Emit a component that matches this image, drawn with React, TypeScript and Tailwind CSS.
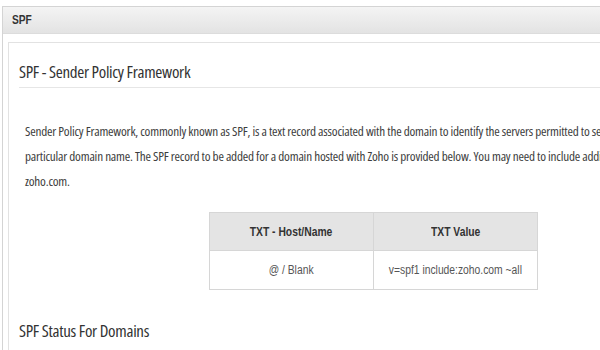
import React from "react";

export default function App() {
  return (
    <div className="w-[600px] h-[350px] overflow-hidden bg-white pt-[6px] pl-[2px]" style={{ fontFamily: '"Open Sans", sans-serif' }}>
      <div className="w-[640px] border-l border-t border-[#d4d4d4] h-[400px]">
        <div className="h-[27px] bg-gradient-to-b from-[#f4f4f4] to-[#e3e3e3] border-b border-[#dcdcdc] flex items-center pl-[9px]">
          <span className="text-[12px] font-bold text-[#333] [font-family:'Liberation_Sans',Arial,sans-serif] scale-x-[0.85] origin-left inline-block">SPF</span>
        </div>
        <div className="pt-[8px] pl-[5px]">
          <div className="border-l border-t border-[#e2e2e2] pl-[10px] pt-[18px] h-[400px]">
            <div className="text-[17px] text-[#333] leading-[22px] [font-stretch:82%] tracking-[-0.3px] pb-[4px] border-b border-[#e6e6e6]">
              SPF - Sender Policy Framework
            </div>
            <div className="pl-[6px] pt-[31px] text-[13.2px] leading-[25px] text-[#3d3d3d] [font-stretch:82%] tracking-[-0.2px] w-[700px]">
              <p className="whitespace-nowrap">Sender Policy Framework, commonly known as SPF, is a text record associated with the domain to identify the servers permitted to send emails for a</p>
              <p className="whitespace-nowrap">particular domain name. The SPF record to be added for a domain hosted with Zoho is provided below. You may need to include additional records</p>
              <p>zoho.com.</p>
            </div>
            <div className="pl-[190px] pt-[18px]">
              <table className="border-collapse text-[12px] text-[#333] [font-family:'Liberation_Sans',Arial,sans-serif]">
                <thead>
                  <tr className="bg-[#e4e4e4] h-[38px]">
                    <th className="w-[164px] border border-[#d6d6d6] font-bold text-center">
                      <span className="inline-block scale-x-[0.86]">TXT - Host/Name</span>
                    </th>
                    <th className="w-[164px] border border-[#d6d6d6] font-bold text-center">
                      <span className="inline-block scale-x-[0.86]">TXT Value</span>
                    </th>
                  </tr>
                </thead>
                <tbody>
                  <tr className="h-[39px]">
                    <td className="border border-[#d6d6d6] text-center text-[#555]">
                      <span className="inline-block scale-x-[0.86]">@ / Blank</span>
                    </td>
                    <td className="border border-[#d6d6d6] text-center text-[#555]">
                      <span className="inline-block scale-x-[0.86]">v=spf1 include:zoho.com ~all</span>
                    </td>
                  </tr>
                </tbody>
              </table>
            </div>
            <div className="pt-[30px] text-[17px] text-[#333] leading-[22px] [font-stretch:82%] tracking-[-0.3px]">
              SPF Status For Domains
            </div>
          </div>
        </div>
      </div>
    </div>
  );
}
